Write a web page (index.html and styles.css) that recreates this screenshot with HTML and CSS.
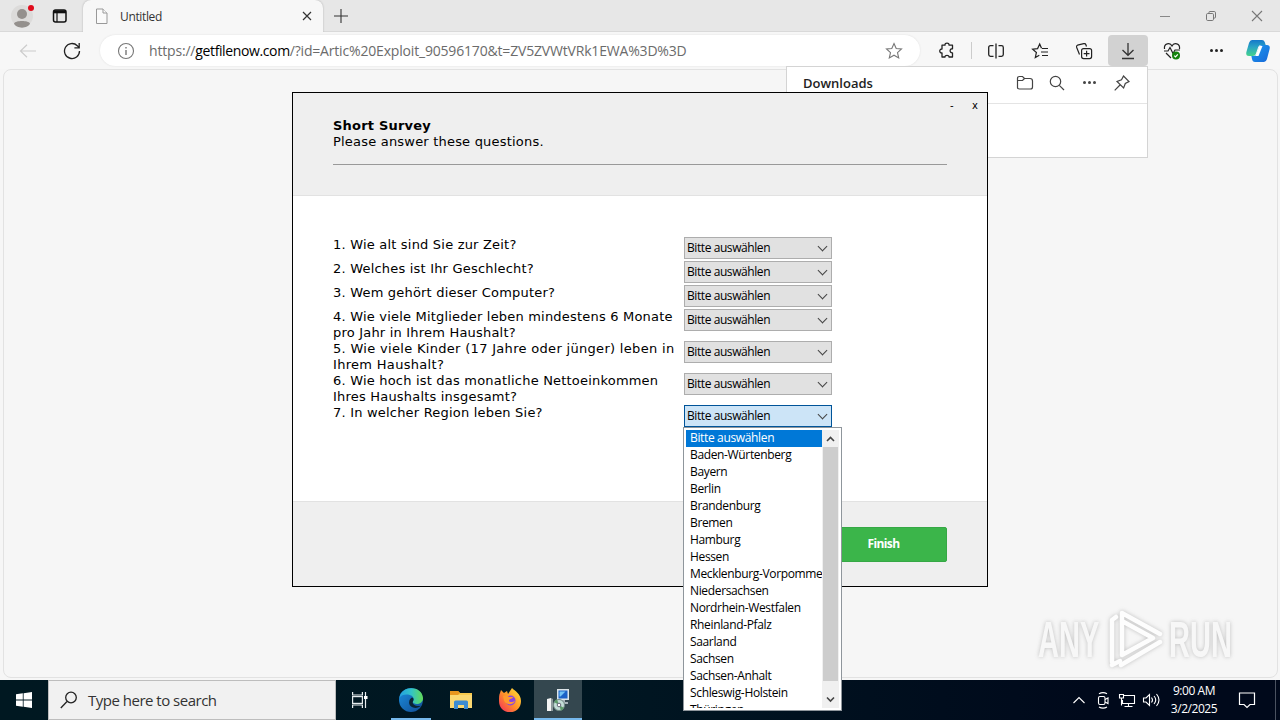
FILE: index.html
```html
<!DOCTYPE html>
<html lang="de">
<head>
    <meta charset="UTF-8">
    <meta name="viewport" content="width=device-width, initial-scale=1.0">
    <title>Short Survey</title>
    <link rel="stylesheet" href="styles.css">
</head>
<body>
    <div id="browser">
        <div class="tab-bar">
            <div class="tab-tools">
                <svg class="profile" width="24" height="26" viewBox="0 0 24 26">
                    <circle cx="11" cy="13" r="11" fill="#dcdbda"/>
                    <circle cx="11" cy="11" r="5" fill="#94908d"/>
                    <path d="M3 20.500c1-3.500 15-3.500 16 0-2 5.500-14 5.500-16 0z" fill="#94908d"/>
                    <circle cx="20" cy="5" r="3" fill="#e00b1c"/>
                </svg>
                <svg width="16" height="16" viewBox="0 0 16 16" fill="none" stroke="#111" stroke-width="1.5">
                    <rect x="1.5" y="2" width="12.5" height="12" rx="2"/>
                    <path d="M2 3.8h12" stroke-width="3"/>
                    <path d="M5 3v11" stroke-width="1.2"/>
                </svg>
            </div>
            <div class="tab">
                <svg width="14" height="17" viewBox="0 0 14 17" fill="#fafafa" stroke="#999">
                    <path d="M1.5 1h6.5l4 4v10.500h-10.500z"/>
                    <path d="M8 1v4h4"/>
                </svg>
                <span class="tab-title">Untitled</span>
                <svg width="10" height="10" viewBox="0 0 10 10" stroke="#333" stroke-width="1.2">
                    <path d="M1 1l8 8M9 1l-8 8"/>
                </svg>
            </div>
            <svg class="new-tab" width="14" height="14" viewBox="0 0 14 14" stroke="#333" stroke-width="1.1">
                <path d="M7 0v14M0 7h14"/>
            </svg>
            <div class="window-buttons">
                <svg width="12" height="12" viewBox="0 0 12 12" stroke="#888"><path d="M1 6.500h10"/></svg>
                <svg width="12" height="12" viewBox="0 0 12 12" fill="none" stroke="#777">
                    <rect x="1.500" y="3.500" width="7" height="7" rx="1.200"/>
                    <path d="M4 3V2.200q0-.7.700-.7h4.500q1.300 0 1.300 1.300v4.500q0 .7-.7.700H9"/>
                </svg>
                <svg width="12" height="12" viewBox="0 0 12 12" stroke="#777" stroke-width="1.100"><path d="M1 1l10 10M11 1L1 11"/></svg>
            </div>
        </div>

        <div class="toolbar">
            <div class="nav">
                <svg width="18" height="14" viewBox="0 0 18 14" fill="none" stroke="#ccc" stroke-width="1.200">
                    <path d="M17 7H1.500M8 .7L1.500 7 8 13.300"/>
                </svg>
                <svg width="18" height="18" viewBox="0 0 18 18" fill="none" stroke="#222" stroke-width="1.300">
                    <path d="M16.500 9a7.500 7.500 0 1 1-2.200-5.300l1.700 1.700M16.200 1v4.800h-4.800"/>
                </svg>
            </div>
            <div class="address">
                <svg width="18" height="18" viewBox="0 0 18 18" fill="none" stroke="#777" stroke-width="1.100">
                    <circle cx="9" cy="9" r="7.500"/>
                    <path d="M9 8v5M9 5v1.500" stroke-width="1.400"/>
                </svg>
                <span class="url">https://<b>getfilenow.com</b>/?id=Artic%20Exploit_90596170&amp;t=ZV5ZVWtVRk1EWA%3D%3D</span>
                <svg width="18" height="18" viewBox="0 0 18 18" fill="none" stroke="#777" stroke-width="1.100">
                    <path d="M9 1.500l2.200 5 5.300.5-4 3.600 1.200 5.300L9 13.200l-4.700 2.700 1.200-5.300-4-3.600 5.300-.5z"/>
                </svg>
            </div>
            <div class="actions">
                <div class="action">
                    <svg width="18" height="18" viewBox="0 0 18 18" fill="none" stroke="#222" stroke-width="1.300" stroke-linejoin="round">
                        <path d="M4 3.200h3c-.4-2.900 4.400-2.900 4 0h3.500v3.600c-3.200-.5-3.200 4.400 0 4V15H11c.2-2.200-4.200-2.200-4 0H4v-4c-3 .3-3-4.200 0-4z"/>
                    </svg>
                </div>
                <div class="separator"></div>
                <div class="action">
                    <svg width="18" height="18" viewBox="0 0 18 18" fill="none" stroke="#222" stroke-width="1.300">
                        <path d="M9 1.500v15M6.500 3.700h-3q-1.800 0-1.800 1.800v7q0 1.800 1.800 1.800h3M11.500 3.700h3q1.800 0 1.800 1.800v7q0 1.800-1.800 1.800h-3"/>
                    </svg>
                </div>
                <div class="action">
                    <svg width="18" height="18" viewBox="0 0 18 18" fill="none" stroke="#222" stroke-width="1.200">
                        <path d="M10.500 6.300L8.700 2 6.600 6.600l-5 .5 3.800 3.400L4.300 15.500l4-2.300M11 6.500h6M10 10h7M11 13.500h6"/>
                    </svg>
                </div>
                <div class="action">
                    <svg width="18" height="18" viewBox="0 0 18 18" fill="none" stroke="#222" stroke-width="1.200">
                        <rect x="6.600" y="6.600" width="10" height="10" rx="2"/>
                        <path d="M11.600 8.700v5.800M8.700 11.600h5.800M4.500 12.500L1.600 5.200q-.5-1.500.9-2l6.300-1.500q1.600-.4 2.100 1l.6 1.800"/>
                    </svg>
                </div>
                <div class="action pressed">
                    <svg width="16" height="18" viewBox="0 0 16 18" fill="none" stroke="#333" stroke-width="1.300">
                        <path d="M8 1v12M2.500 8L8 13.300 13.500 8M2 16.500h12"/>
                    </svg>
                </div>
                <div class="action">
                    <svg width="18" height="18" viewBox="0 0 18 18" fill="none" stroke="#222" stroke-width="1.200">
                        <path d="M1.500 7c-.8-5.500 5.500-7 7.500-3 2-4 8.300-2.500 7.500 3M1 9h4l2-3.500 3 6L12 8h5M3 11l5 5"/>
                        <circle cx="13" cy="13.500" r="4" fill="#14830d" stroke="none"/>
                        <path d="M11.200 13.600l1.300 1.300 2.300-2.600" stroke="#fff"/>
                    </svg>
                </div>
                <div class="action dots"><i></i><i></i><i></i></div>
                <div class="action copilot">
                    <svg width="24" height="24" viewBox="0 0 24 24">
                        <defs>
                            <linearGradient id="cpLeft" x1="0" y1="0" x2="0" y2="1"><stop offset="0" stop-color="#1478ca"/><stop offset=".45" stop-color="#2aa5c4"/><stop offset="1" stop-color="#45d38c"/></linearGradient>
                            <linearGradient id="cpRight" x1="0" y1="0" x2="1" y2="1"><stop offset="0" stop-color="#1b9af0"/><stop offset="1" stop-color="#1868d8"/></linearGradient>
                        </defs>
                        <path d="M6 1h10q2 0 2.700 2l1 3H15q-2 0-2.800 2l-2.400 7q-.8 2-2.800 2H3Q-.5 17 .4 13L3 4Q4 1 6 1z" fill="url(#cpLeft)"/>
                        <path d="M18 23H9q-2.500 0-3-3l-.6-3H8q2 0 2.800-2l2.500-7Q14 6 16 6h5q3.500 0 2.600 4L21 20q-.9 3-3 3z" fill="url(#cpRight)"/>
                        <path d="M13.500 7h3l-4 10h-3z" fill="#fff"/>
                    </svg>
                </div>
            </div>
        </div>

        <div class="page"></div>
    </div>

    <div id="downloads">
        <div class="downloads-head">
            <span>Downloads</span>
            <div class="downloads-tools">
                <svg width="18" height="16" viewBox="0 0 18 16" fill="none" stroke="#444" stroke-width="1.200">
                    <path d="M1.500 12.500v-9q0-2 2-2h3l2 2h5.500q2.500 0 2.500 2.500v6q0 2-2 2h-11q-2 0-2-1.500zM1.500 5.500h5l2-2"/>
                </svg>
                <svg width="16" height="16" viewBox="0 0 16 16" fill="none" stroke="#444" stroke-width="1.200">
                    <circle cx="6.500" cy="6.500" r="5.200"/>
                    <path d="M10.300 10.300l4.700 4.700"/>
                </svg>
                <div class="dots small"><i></i><i></i><i></i></div>
                <svg width="16" height="16" viewBox="0 0 16 16" fill="none" stroke="#444" stroke-width="1.200">
                    <path d="M9.500 1l5.500 5.500-3.700 2L9.600 13 3 6.500l4.500-1.700zM6 10l-5.300 5.300"/>
                </svg>
            </div>
        </div>
    </div>

    <div id="watermark">
        <span>ANY</span>
        <svg width="58" height="64" viewBox="0 0 58 64" fill="none" stroke="#fff" stroke-width="4.500" stroke-linejoin="round" stroke-linecap="round">
            <path d="M15 47V5l38 21M53 34L14 57M15 47l31-17L15 13"/>
            <path d="M5 54V12l4-3M5 57l8-4"/>
        </svg>
        <span>RUN</span>
    </div>

    <div id="survey">
        <div class="survey-head">
            <div class="survey-controls"><span>-</span><span>x</span></div>
            <h1>Short Survey</h1>
            <p>Please answer these questions.</p>
            <hr>
        </div>
        <div class="survey-body">
            <div class="question">
                <label>1. Wie alt sind Sie zur Zeit?</label>
                <div class="combo">Bitte auswählen</div>
            </div>
            <div class="question">
                <label>2. Welches ist Ihr Geschlecht?</label>
                <div class="combo">Bitte auswählen</div>
            </div>
            <div class="question">
                <label>3. Wem gehört dieser Computer?</label>
                <div class="combo">Bitte auswählen</div>
            </div>
            <div class="question tall">
                <label>4. Wie viele Mitglieder leben mindestens 6 Monate<br>pro Jahr in Ihrem Haushalt?</label>
                <div class="combo">Bitte auswählen</div>
            </div>
            <div class="question tall">
                <label class="wide">5. Wie viele Kinder (17 Jahre oder jünger) leben in<br>Ihrem Haushalt?</label>
                <div class="combo">Bitte auswählen</div>
            </div>
            <div class="question tall">
                <label>6. Wie hoch ist das monatliche Nettoeinkommen<br>Ihres Haushalts insgesamt?</label>
                <div class="combo">Bitte auswählen</div>
            </div>
            <div class="question">
                <label>7. In welcher Region leben Sie?</label>
                <div class="combo open">Bitte auswählen</div>
            </div>
        </div>
        <div class="survey-foot">
            <button class="finish">Finish</button>
        </div>
    </div>

    <div id="taskbar">
        <div class="start">
            <svg width="16" height="16" viewBox="0 0 16 16" fill="#fff">
                <path d="M0 2.300L6.800 1.300v6.200H0zM7.600 1.200L16 0v7.500H7.600zM0 8.400h6.800v6.300L0 13.700zM7.600 8.400H16V16l-8.400-1.200z"/>
            </svg>
        </div>
        <div class="search">
            <svg width="18" height="18" viewBox="0 0 18 18" fill="none" stroke="#222" stroke-width="1.300">
                <circle cx="11" cy="6.500" r="5.300"/>
                <path d="M7 10.500L.8 17"/>
            </svg>
            <span>Type here to search</span>
        </div>
        <div class="task">
            <svg width="18" height="16" viewBox="0 0 18 16" fill="none" stroke="#e6ecee" stroke-width="1.200">
                <path d="M1.600 0v3h9.800V0M1.600 16v-3h9.800v3M14.500 0v16"/>
                <rect x="1.600" y="4.600" width="9.800" height="6.800"/>
                <rect x="13" y="4" width="3.500" height="3" fill="#fff" stroke="none"/>
            </svg>
        </div>
        <div class="task running">
            <svg width="24" height="24" viewBox="0 0 24 24">
                <defs>
                    <linearGradient id="edgeTop" x1="0" y1="0" x2="1" y2="0"><stop offset="0" stop-color="#239fe0"/><stop offset=".5" stop-color="#32c3c8"/><stop offset="1" stop-color="#63db56"/></linearGradient>
                    <linearGradient id="edgeLow" x1="0" y1="0" x2="1" y2="1"><stop offset="0" stop-color="#1b8ede"/><stop offset="1" stop-color="#114c94"/></linearGradient>
                </defs>
                <circle cx="12" cy="12" r="12" fill="url(#edgeLow)"/>
                <path d="M.3 10C2-3 23-3 24 10c.3 5-6 7.500-9.500 5-1.800-1.300.5-2 .3-4C14 5.500 3 5 .3 10z" fill="url(#edgeTop)"/>
                <path d="M13 9.500c-3 1-5 8 1 10 3 1 6 0 8.300-2-1 .6-5 1.200-7.500-1-2.300-2-.2-3.500-.3-5 0-1-.5-1.700-1.500-2z" fill="#0b2332"/>
            </svg>
        </div>
        <div class="task">
            <svg width="22" height="20" viewBox="0 0 22 20">
                <path d="M0 1h8l2 2h12v15H0z" fill="#f8ca4e"/>
                <path d="M0 1h8l2 2-2 2H0z" fill="#e8961f"/>
                <path d="M0 5h22v13H0z" fill="#fbd872"/>
                <path d="M4 19v-7q0-1.500 1.500-1.500h11Q18 10.500 18 12v7h-4v-4H8v4z" fill="#3d8cd2"/>
            </svg>
        </div>
        <div class="task">
            <svg width="24" height="24" viewBox="0 0 24 24">
                <defs>
                    <linearGradient id="fox" x1="1" y1="0" x2="0" y2="1"><stop offset="0" stop-color="#ffe83c"/><stop offset=".5" stop-color="#ff9428"/><stop offset="1" stop-color="#f3265f"/></linearGradient>
                </defs>
                <path d="M2 5l1-3 3 3 3-2 1 3 4-6c3 3 9 6 9 13 0 15-22 15-22 0C1 9 1 7 2 5z" fill="url(#fox)"/>
                <circle cx="12.500" cy="12.500" r="5" fill="#8a45e0"/>
                <path d="M5 8c3-1 5 0 6 1h4c0 2-4 1.500-4 3.500 0 2 4 2 6 0-1 5-9 5-11 0z" fill="#ff9a2d"/>
            </svg>
        </div>
        <div class="task running active">
            <svg width="24" height="24" viewBox="0 0 24 24">
                <path d="M11 1h12v11H11z" fill="#dce4e8"/>
                <path d="M12.500 2.500h9v8h-9z" fill="#1b62c8"/>
                <path d="M13.500 3.500h6l-5 5h-1z" fill="#72c3f5"/>
                <path d="M15 12h4v2h3v2H12v-2h3z" fill="#a9b4ba"/>
                <path d="M1 11l4-1v13H1z" fill="#f3f3f3"/>
                <path d="M5 10l2 1v12H5z" fill="#8e9a9c"/>
                <circle cx="13" cy="17" r="5.500" fill="#c3ddd7" stroke="#718984"/>
                <path d="M13 17l-5-3a6 6 0 0 1 3-2.700zM13 17l5 3a6 6 0 0 1-3 2.700z" fill="#5d9a6a"/>
                <circle cx="13" cy="17" r="1.800" fill="#fff" stroke="#667"/>
            </svg>
        </div>
        <div class="tray">
            <svg width="24" height="18" viewBox="0 0 24 18"><path d="M6.500 12L12 6.500l5.500 5.500"/></svg>
            <svg width="24" height="18" viewBox="0 0 24 18"><rect x="7.500" y="5.500" width="6.500" height="8" rx="1.500"/><path d="M14 8.500l3-1.500v5.500l-3-1.500M8 2.800q4-2.300 8 0M8 16q4 2.300 8 0"/></svg>
            <svg width="24" height="18" viewBox="0 0 24 18"><path d="M9 4.500h10.500v8H7.500V9M13.500 12.500v3M9.500 15.500h8M4.500 3.500h4v3.500h-4zM6.500 7v7.500"/></svg>
            <svg width="24" height="18" viewBox="0 0 24 18"><path d="M4.500 7h2.500l3.500-3.500v11L7 11H4.500zM12.500 6.500q2 2.500 0 5M15 5q3.500 4 0 8M17.500 3q5 6 0 12"/></svg>
        </div>
        <div class="clock"><span>9:00 AM</span><span>3/2/2025</span></div>
        <div class="notes">
            <svg width="18" height="18" viewBox="0 0 18 18" fill="none" stroke="#fff" stroke-width="1.200">
                <path d="M1.500 2h15v11.500h-4.500L9 16.500l-3-3H1.500z"/>
            </svg>
        </div>
    </div>

    <!-- opened region list, lies over the survey and the taskbar -->
    <div id="region-list">
        <ul>
            <li class="selected">Bitte auswählen</li>
            <li>Baden-Würtenberg</li>
            <li>Bayern</li>
            <li>Berlin</li>
            <li>Brandenburg</li>
            <li>Bremen</li>
            <li>Hamburg</li>
            <li>Hessen</li>
            <li>Mecklenburg-Vorpommern</li>
            <li>Niedersachsen</li>
            <li>Nordrhein-Westfalen</li>
            <li>Rheinland-Pfalz</li>
            <li>Saarland</li>
            <li>Sachsen</li>
            <li>Sachsen-Anhalt</li>
            <li>Schleswig-Holstein</li>
            <li>Thüringen</li>
        </ul>
        <div class="scrollbar">
            <svg width="9" height="17" viewBox="0 0 9 17"><path d="M1 11l3.500-3.500L8 11"/></svg>
            <div class="thumb"></div>
            <svg class="down" width="9" height="17" viewBox="0 0 9 17"><path d="M1 6.500L4.500 10 8 6.500"/></svg>
        </div>
    </div>
</body>
</html>
```
FILE: styles.css
```css
* {
    box-sizing: border-box;
}

body {
    margin: 0;
    width: 1280px;
    height: 720px;
    overflow: hidden;
    display: flex;
    flex-direction: column;
    background-color: #f6f6f6;
    font-family: "Open Sans", "Noto Sans", sans-serif;
    color: #000;
}

svg {
    display: block;
    flex: none;
}

#browser {
    flex: 1;
    display: flex;
    flex-direction: column;
}

/* Tabs */
.tab-bar {
    display: flex;
    align-items: center;
    height: 32px;
    background-color: #e7e7e7;
    border-bottom: 1px solid #d9d9d9;
}

.tab-tools {
    width: 83px;
    display: flex;
    align-items: center;
    padding-left: 11px;
    gap: 17px;
}

.tab {
    width: 240px;
    height: 32px;
    margin-bottom: -1px;
    padding: 0 11px 0 12px;
    display: flex;
    align-items: center;
    background-color: #f7f7f7;
    border-radius: 8px 8px 0 0;
    box-shadow: 0 0 2px #aaa;
    clip-path: inset(0 -3px 0 -3px);
}

.tab-title {
    flex: 1;
    margin-left: 11px;
    font-size: 12px;
    letter-spacing: -0.35px;
    color: #333;
}

.new-tab {
    margin-left: 11px;
}

.window-buttons {
    margin-left: auto;
    margin-right: 17px;
    display: flex;
    gap: 34px;
}

/* Toolbar */
.toolbar {
    display: flex;
    align-items: center;
    height: 37px;
    background-color: #f7f7f7;
}

.nav {
    width: 100px;
    display: flex;
    align-items: center;
    gap: 26px;
    padding-left: 19px;
}

.address {
    width: 820px;
    height: 31px;
    display: flex;
    align-items: center;
    padding: 0 17px;
    background-color: #fff;
    border-radius: 16px;
    box-shadow: 0 0 2px #ddd;
}

.url {
    flex: 1;
    margin-left: 14px;
    font-size: 14px;
    letter-spacing: -0.18px;
    color: #6b6b6b;
}

.url b {
    font-weight: normal;
    letter-spacing: -0.38px;
    color: #000;
}

.actions {
    display: flex;
    align-items: center;
    margin-left: 5px;
}

.action {
    width: 44px;
    height: 31px;
    display: flex;
    align-items: center;
    justify-content: center;
}

.action.copilot {
    width: 40px;
}

.separator {
    width: 1px;
    height: 17px;
    margin: 0 2px;
    background-color: #ccc;
}

.pressed {
    width: 40px;
    margin: 0 2px;
    background-color: #d2d2d2;
    border-radius: 4px;
}

.dots {
    gap: 2px;
    display: flex;
}

.dots i {
    width: 3px;
    height: 3px;
    border-radius: 50%;
    background-color: #222;
}

.dots.small i {
    background-color: #444;
}

.page {
    flex: 1;
    margin: 0 2px 2px 3px;
    background-color: #f6f6f6;
    border: 1px solid #e2e2e2;
    border-radius: 8px;
}

/* Downloads flyout */
#downloads {
    position: absolute;
    left: 786px;
    top: 66px;
    width: 362px;
    height: 92px;
    background-color: #fff;
    border: 1px solid #d4d4d4;
}

.downloads-head {
    height: 37px;
    display: flex;
    align-items: center;
    justify-content: space-between;
    padding: 0 17px 4px 16px;
    border-bottom: 1px solid #e4e4e4;
    font-size: 13px;
    font-weight: 600;
    color: #222;
}

.downloads-tools {
    display: flex;
    align-items: center;
    gap: 15px;
}

.downloads-tools .dots {
    margin: 0 3px 2px;
}

/* Watermark */
#watermark {
    position: absolute;
    left: 1038px;
    top: 608px;
    display: flex;
    align-items: center;
    gap: 4px;
    color: #f8f8f8;
    font-family: "Liberation Sans", sans-serif;
    font-size: 50px;
    font-weight: bold;
    filter: drop-shadow(0 0 2px #b4b4b4);
    opacity: 0.85;
}

#watermark span {
    width: 65px;
    white-space: nowrap;
    transform: scaleX(0.58);
    transform-origin: left;
}

/* Survey window */
#survey {
    position: absolute;
    left: 292px;
    top: 92px;
    width: 696px;
    height: 495px;
    display: flex;
    flex-direction: column;
    background-color: #fff;
    border: 1px solid #000;
    font-family: "DejaVu Sans", sans-serif;
    font-size: 13px;
    line-height: 16px;
    letter-spacing: 0.2px;
}

.survey-head {
    height: 103px;
    padding: 0 40px;
    background-color: #efefef;
    border-bottom: 1px solid #e2e2e2;
}

.survey-controls {
    display: flex;
    justify-content: flex-end;
    gap: 18px;
    height: 25px;
    margin-right: -31px;
    padding-top: 5px;
    font-size: 10px;
}

.survey-head h1 {
    margin: 0;
    font-size: 13px;
    line-height: 16px;
}

.survey-head p {
    margin: 0;
}

.survey-head hr {
    margin: 14px 0 0;
    border: 0;
    border-top: 1px solid #999;
}

.survey-body {
    flex: 1;
    padding: 41px 40px 0;
}

.question {
    height: 24px;
    display: grid;
    grid-template-columns: 351px 148px;
    align-items: start;
    white-space: nowrap;
}

.question.tall {
    height: 32px;
}

.question .wide {
    letter-spacing: 0.31px;
}

.combo {
    position: relative;
    height: 22px;
    padding-left: 2px;
    background-color: #e1e1e1;
    border: 1px solid #adadad;
    font-family: "Open Sans", "Noto Sans", sans-serif;
    font-size: 12px;
    line-height: 20px;
    letter-spacing: -0.42px;
}

.combo::after {
    content: "";
    position: absolute;
    right: 5px;
    top: 5px;
    width: 6px;
    height: 6px;
    border-right: 1px solid #444;
    border-bottom: 1px solid #444;
    transform: rotate(45deg);
}

.combo.open {
    background-color: #cce4f7;
    border-color: #005499;
}

.survey-foot {
    height: 85px;
    display: flex;
    justify-content: flex-end;
    align-items: center;
    padding-right: 40px;
    background-color: #efefef;
    border-top: 1px solid #e2e2e2;
}

.finish {
    width: 127px;
    height: 35px;
    padding: 0 0 1px;
    background-color: #3bb54a;
    border: 1px solid #36a845;
    border-radius: 2px;
    color: #fff;
    font-family: "Open Sans", sans-serif;
    font-size: 12px;
    font-weight: bold;
    letter-spacing: -0.6px;
}

/* Region list */
#region-list {
    position: absolute;
    left: 683px;
    top: 427px;
    width: 159px;
    height: 284px;
    display: flex;
    padding: 2px;
    background-color: #fff;
    border: 1px solid #8f969c;
}

#region-list ul {
    flex: 1;
    margin: 0;
    padding: 0;
    list-style: none;
    overflow: hidden;
    font-size: 12px;
    letter-spacing: -0.35px;
    line-height: 16px;
    white-space: nowrap;
}

#region-list li {
    height: 17px;
    padding-left: 4px;
}

#region-list .selected {
    background-color: #0078d7;
    color: #fff;
}

.scrollbar {
    width: 17px;
    display: flex;
    flex-direction: column;
    align-items: center;
    padding-right: 1px;
    background-color: #f0f0f0;
}

.scrollbar svg {
    fill: none;
    stroke: #444;
    stroke-width: 1.6;
}

.scrollbar .down {
    margin-top: auto;
}

.thumb {
    width: 15px;
    height: 234px;
    background-color: #cdcdcd;
}

/* Taskbar */
#taskbar {
    height: 40px;
    display: flex;
    background: linear-gradient(to right, #001821, #001722 45%, #00091b 85%);
    color: #fff;
}

.start {
    width: 48px;
    display: flex;
    align-items: center;
    justify-content: center;
}

.search {
    width: 288px;
    display: flex;
    align-items: center;
    gap: 10px;
    padding-left: 11px;
    background-color: #f1f1f1;
    border: 1px solid #bdbdbd;
    color: #333;
    font-size: 15px;
    letter-spacing: -0.5px;
}

.task {
    width: 49px;
    display: flex;
    align-items: center;
    justify-content: center;
    position: relative;
}

.search + .task {
    width: 51px;
    padding-right: 3px;
}

.running {
    padding-right: 2px;
}

.running::after {
    content: "";
    position: absolute;
    left: 4px;
    right: 5px;
    bottom: 0;
    height: 2px;
    background-color: #76b9ed;
}

.active {
    width: 48px;
    padding-right: 0;
    background-color: #34474f;
}

.active::after {
    left: 0;
    right: 0;
}

.tray {
    margin-left: auto;
    display: flex;
    align-items: center;
}

.tray svg {
    fill: none;
    stroke: #fff;
    stroke-width: 1.1;
}

.clock {
    width: 62px;
    display: flex;
    flex-direction: column;
    align-items: center;
    justify-content: center;
    font-size: 12px;
    line-height: 18px;
    letter-spacing: -0.45px;
}

.notes {
    width: 51px;
    margin-right: 4px;
    padding-left: 13px;
    display: flex;
    align-items: center;
    border-right: 1px solid #4a5260;
}
```
